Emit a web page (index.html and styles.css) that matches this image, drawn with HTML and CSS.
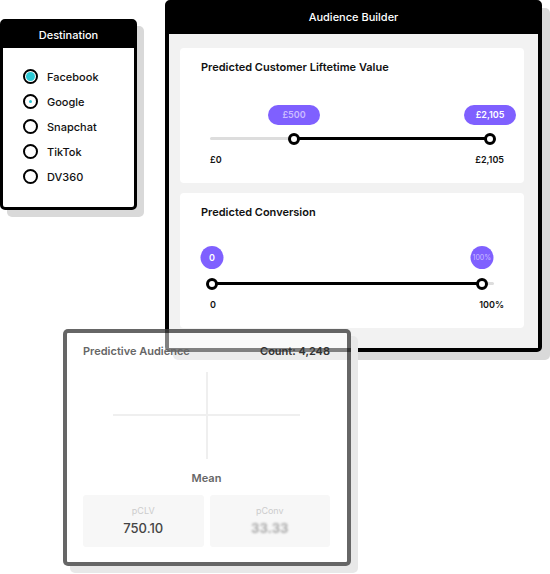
FILE: index.html
```html
<!DOCTYPE html>
<html lang="en">
<head>
    <meta charset="UTF-8">
    <meta name="viewport" content="width=device-width, initial-scale=1.0">
    <title>Audience Builder</title>
    <link rel="stylesheet" href="styles.css">
</head>
<body>
    <div class="canvas">

        <!-- Destination window -->
        <section class="window dest">
            <header class="win-head">Destination</header>
            <ul class="radio-list">
                <li class="radio-item"><span class="radio checked"></span>Facebook</li>
                <li class="radio-item"><span class="radio hover"></span>Google</li>
                <li class="radio-item"><span class="radio"></span>Snapchat</li>
                <li class="radio-item"><span class="radio"></span>TikTok</li>
                <li class="radio-item"><span class="radio"></span>DV360</li>
            </ul>
        </section>

        <!-- Audience Builder window -->
        <section class="window builder">
            <header class="win-head">Audience Builder</header>
            <div class="builder-body">
                <div class="card">
                    <h3 class="card-title">Predicted Customer Liftetime Value</h3>
                    <div class="slider slider-clv">
                        <div class="track-fill" style="left:30%; right:0"></div>
                        <div class="thumb" style="left:30%"><span class="pill muted">£500</span></div>
                        <div class="thumb" style="left:100%"><span class="pill">£2,105</span></div>
                    </div>
                    <div class="slider-labels"><span>£0</span><span>£2,105</span></div>
                </div>
                <div class="card">
                    <h3 class="card-title">Predicted Conversion</h3>
                    <div class="slider slider-conv">
                        <div class="track-fill" style="left:0; right:4.3%"></div>
                        <div class="thumb" style="left:0"><span class="bubble">0</span></div>
                        <div class="thumb" style="left:95.7%"><span class="bubble muted small">100%</span></div>
                    </div>
                    <div class="slider-labels"><span>0</span><span>100%</span></div>
                </div>
            </div>
        </section>

        <!-- Predictive Audience window -->
        <section class="window audience">
            <div class="aud-head">
                <span class="aud-title">Predictive Audience</span>
                <span class="aud-count">Count: 4,248</span>
            </div>
            <div class="crosshair"></div>
            <div class="mean">Mean</div>
            <div class="stats">
                <div class="stat">
                    <span class="stat-label">pCLV</span>
                    <span class="stat-value">750.10</span>
                </div>
                <div class="stat">
                    <span class="stat-label">pConv</span>
                    <span class="stat-value blurred">33.33</span>
                </div>
            </div>
        </section>

    </div>
</body>
</html>
```

FILE: styles.css
```css
body {
    margin: 0;
    background-color: #fff;
    font-family: Inter, "Liberation Sans", sans-serif;
    color: #111;
}
.canvas {
    position: relative;
    width: 550px;
    height: 574px;
    overflow: hidden;
}

/* windows */
.window {
    position: absolute;
    box-sizing: border-box;
    display: flex;
    flex-direction: column;
    border: 4px solid #000;
    border-radius: 5px;
    background-color: #fff;
    box-shadow: 8px 8px 0 #d9d9d9;
}
.win-head {
    background-color: #000;
    color: #fff;
    font-size: 11px;
    font-weight: 500;
    display: flex;
    align-items: center;
    justify-content: center;
}

/* destination */
.dest {
    left: 0;
    top: 19px;
    width: 137px;
    height: 191px;
    border-width: 3px;
    box-shadow: 7px 7px 0 #d9d9d9;
}
.dest .win-head {
    height: 26px;
    padding-bottom: 1px;
    box-sizing: border-box;
}
.radio-list {
    list-style: none;
    margin: 0;
    padding: 16px 0 0 20px;
}
.radio-item {
    height: 25px;
    display: flex;
    align-items: center;
    gap: 9px;
    font-size: 11px;
    font-weight: 500;
}
.radio {
    width: 15px;
    height: 15px;
    box-sizing: border-box;
    border: 2px solid #000;
    border-radius: 50%;
    display: flex;
    align-items: center;
    justify-content: center;
}
.radio.checked::after {
    content: "";
    width: 9px;
    height: 9px;
    border-radius: 50%;
    background-color: #2bc8d4;
}
.radio.hover::after {
    content: "";
    width: 3px;
    height: 3px;
    border-radius: 50%;
    background-color: #2bc8d4;
}

/* audience builder */
.builder {
    left: 165px;
    top: 0;
    width: 377px;
    height: 352px;
}
.builder .win-head {
    height: 30px;
    padding-bottom: 4px;
    box-sizing: border-box;
}
.builder-body {
    flex: 1;
    background-color: #f2f2f2;
    padding: 14px 14px 20px 11px;
    display: flex;
    flex-direction: column;
    gap: 10px;
}
.card {
    height: 135px;
    box-sizing: border-box;
    background-color: #fff;
    border-radius: 4px;
    padding: 12px 20px 0 21px;
}
.card-title {
    margin: 0;
    font-size: 11px;
    line-height: 14px;
    font-weight: 600;
}
.slider {
    position: relative;
    height: 3px;
    background-color: #ddd;
    border-radius: 2px;
    margin-top: 63px;
}
.slider-clv {
    margin-left: 9px;
    margin-right: 14px;
}
.slider-conv {
    margin-left: 11px;
    margin-right: 10px;
}
.track-fill {
    position: absolute;
    top: 0;
    bottom: 0;
    background-color: #000;
}
.thumb {
    position: absolute;
    top: 50%;
    width: 12px;
    height: 12px;
    box-sizing: border-box;
    border: 3px solid #000;
    border-radius: 50%;
    background-color: #fff;
    transform: translate(-50%, -50%);
}
.pill {
    position: absolute;
    bottom: 17px;
    left: 50%;
    transform: translateX(-50%);
    width: 52px;
    height: 20px;
    border-radius: 10px;
    background-color: #7f60ff;
    color: #fff;
    font-size: 9px;
    font-weight: 600;
    display: flex;
    align-items: center;
    justify-content: center;
}
.bubble {
    position: absolute;
    bottom: 18px;
    left: 50%;
    transform: translateX(-50%);
    width: 23px;
    height: 23px;
    border-radius: 50%;
    background-color: #7f60ff;
    color: #fff;
    font-size: 9px;
    font-weight: 600;
    display: flex;
    align-items: center;
    justify-content: center;
}
.muted {
    color: #cbbcff;
}
.bubble.small {
    font-size: 7px;
    font-weight: 400;
}
.slider-labels {
    display: flex;
    justify-content: space-between;
    margin: 14px 0 0 9px;
    font-size: 9px;
    line-height: 12px;
    font-weight: 600;
}

/* predictive audience */
.audience {
    left: 63px;
    top: 329px;
    width: 288px;
    height: 237px;
    border-color: rgba(0, 0, 0, 0.6);
    background-color: rgba(255, 255, 255, 0.5);
    box-shadow: 7px 7px 0 #e8e8e8;
    padding: 11px 17px 15px 16px;
}
.aud-head {
    display: flex;
    justify-content: space-between;
    font-size: 11px;
    line-height: 14px;
    font-weight: 600;
}
.aud-title {
    color: #666;
}
.aud-count {
    color: #333;
}
.crosshair {
    position: relative;
    align-self: center;
    width: 187px;
    height: 87px;
    margin-top: 14px;
}
.crosshair::before,
.crosshair::after {
    content: "";
    position: absolute;
    background-color: #efefef;
}
.crosshair::before {
    left: 0;
    right: 0;
    top: 42px;
    height: 2px;
}
.crosshair::after {
    top: 0;
    bottom: 0;
    left: 93px;
    width: 2px;
}
.mean {
    margin-top: 12px;
    text-align: center;
    font-size: 11px;
    line-height: 14px;
    font-weight: 600;
    color: #666;
}
.stats {
    margin-top: 10px;
    display: grid;
    grid-template-columns: 1fr 1fr;
    gap: 6px;
}
.stat {
    height: 52px;
    box-sizing: border-box;
    padding-top: 10px;
    background-color: #f7f7f7;
    border-radius: 3px;
    display: flex;
    flex-direction: column;
    align-items: center;
}
.stat-label {
    font-size: 9px;
    line-height: 12px;
    color: #ccc;
}
.stat-value {
    margin-top: 3px;
    font-size: 13px;
    line-height: 16px;
    font-weight: 500;
    color: #444;
}
.stat-value.blurred {
    color: #aaa;
    font-weight: 700;
    filter: blur(0.8px);
}
```
